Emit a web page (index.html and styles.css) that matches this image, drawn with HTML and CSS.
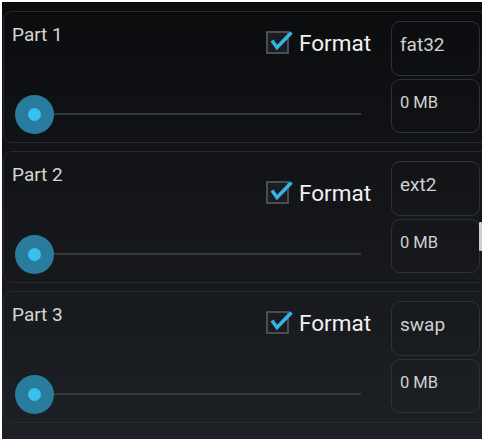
FILE: index.html
```html
<!DOCTYPE html>
<html>
<head>
<meta charset="utf-8">
<link rel="stylesheet" href="styles.css">
</head>
<body>
<div class="screen">
  <div class="card">
    <div class="main">
      <div class="top">
        <span class="label">Part 1</span>
        <label class="fmt">
          <svg class="check" width="28" height="28" viewBox="0 0 28 28"><rect x="1" y="4" width="21" height="21" fill="#1b1d20" stroke="#4a4d51" stroke-width="2"/><polyline points="6,12.5 11,19.5 25.5,4.5" fill="none" stroke="#33b5e5" stroke-width="3.6" stroke-linejoin="miter"/></svg>
          <span class="fmt-text">Format</span>
        </label>
      </div>
      <div class="slider"><div class="track"></div><div class="thumb"><div class="dot"></div></div></div>
    </div>
    <div class="boxes">
      <div class="box box-fs">fat32</div>
      <div class="box box-size">0 MB</div>
    </div>
  </div>
  <div class="card">
    <div class="main">
      <div class="top">
        <span class="label">Part 2</span>
        <label class="fmt fmt-low">
          <svg class="check" width="28" height="28" viewBox="0 0 28 28"><rect x="1" y="4" width="21" height="21" fill="#1b1d20" stroke="#4a4d51" stroke-width="2"/><polyline points="6,12.5 11,19.5 25.5,4.5" fill="none" stroke="#33b5e5" stroke-width="3.6" stroke-linejoin="miter"/></svg>
          <span class="fmt-text">Format</span>
        </label>
      </div>
      <div class="slider"><div class="track"></div><div class="thumb"><div class="dot"></div></div></div>
    </div>
    <div class="boxes">
      <div class="box box-fs">ext2</div>
      <div class="box box-size">0 MB</div>
    </div>
  </div>
  <div class="card">
    <div class="main">
      <div class="top">
        <span class="label">Part 3</span>
        <label class="fmt">
          <svg class="check" width="28" height="28" viewBox="0 0 28 28"><rect x="1" y="4" width="21" height="21" fill="#1b1d20" stroke="#4a4d51" stroke-width="2"/><polyline points="6,12.5 11,19.5 25.5,4.5" fill="none" stroke="#33b5e5" stroke-width="3.6" stroke-linejoin="miter"/></svg>
          <span class="fmt-text">Format</span>
        </label>
      </div>
      <div class="slider"><div class="track"></div><div class="thumb"><div class="dot"></div></div></div>
    </div>
    <div class="boxes">
      <div class="box box-fs">swap</div>
      <div class="box box-size">0 MB</div>
    </div>
  </div>
  <div class="scrollbar"></div>
</div>
</body>
</html>
```
FILE: styles.css
```css
* { box-sizing: border-box; }
html, body { margin: 0; padding: 0; background: #ffffff; }
body { font-family: Roboto, "Noto Sans", sans-serif; }

.screen {
  position: relative;
  margin: 2px;
  width: 480px;
  height: 437px;
  overflow: hidden;
  background: linear-gradient(to bottom, #0b0c0e 0%, #14161a 50%, #1d2024 100%);
  display: flex;
  flex-direction: column;
  gap: 8px;
  padding-top: 9px;
  padding-left: 1px;
}

.card {
  flex: none;
  width: 510px;
  height: 132px;
  border: 1px solid #26292d;
  border-radius: 9px;
  display: flex;
}

.main {
  width: 387px;
  display: flex;
  flex-direction: column;
  padding: 12px 0 8px 8px;
}

.top {
  display: flex;
  align-items: flex-start;
}

.label {
  font-size: 19px;
  line-height: 22px;
  color: #d6d6d6;
}

.fmt {
  margin-left: auto;
  margin-top: 4px;
  padding-right: 20px;
  display: flex;
  align-items: center;
  height: 28px;
}
.fmt-low { margin-top: 14px; }

.check { display: block; margin-left: 0; }

.fmt-text {
  margin-left: 5px;
  padding-top: 2px;
  font-size: 22.5px;
  line-height: 26px;
  color: #f2f2f2;
}

.slider {
  position: relative;
  margin-top: auto;
  margin-left: 3px;
  width: 346px;
  height: 39px;
}
.track {
  position: absolute;
  left: 19px;
  right: 0;
  top: 18px;
  height: 2px;
  background: #35383c;
}
.thumb {
  position: absolute;
  left: 0;
  top: 0;
  width: 39px;
  height: 39px;
  border-radius: 50%;
  background: #2a7c9e;
  display: flex;
  align-items: center;
  justify-content: center;
}
.dot {
  width: 13px;
  height: 13px;
  border-radius: 50%;
  background: #3bbfee;
}

.boxes {
  width: 89px;
  margin-top: 9px;
  display: flex;
  flex-direction: column;
  gap: 3px;
}
.box {
  border: 1px solid #2e3135;
  border-radius: 9px;
  padding-left: 8px;
  color: #d0d0d0;
}
.box-fs {
  height: 55px;
  padding-top: 12px;
  font-size: 19px;
  line-height: 22px;
}
.box-size {
  height: 54px;
  padding-top: 13px;
  font-size: 16.5px;
  line-height: 20px;
}

.scrollbar {
  position: absolute;
  right: 0;
  top: 220px;
  width: 3px;
  height: 29px;
  background: #cfcfcf;
  border-radius: 1px;
}
```
